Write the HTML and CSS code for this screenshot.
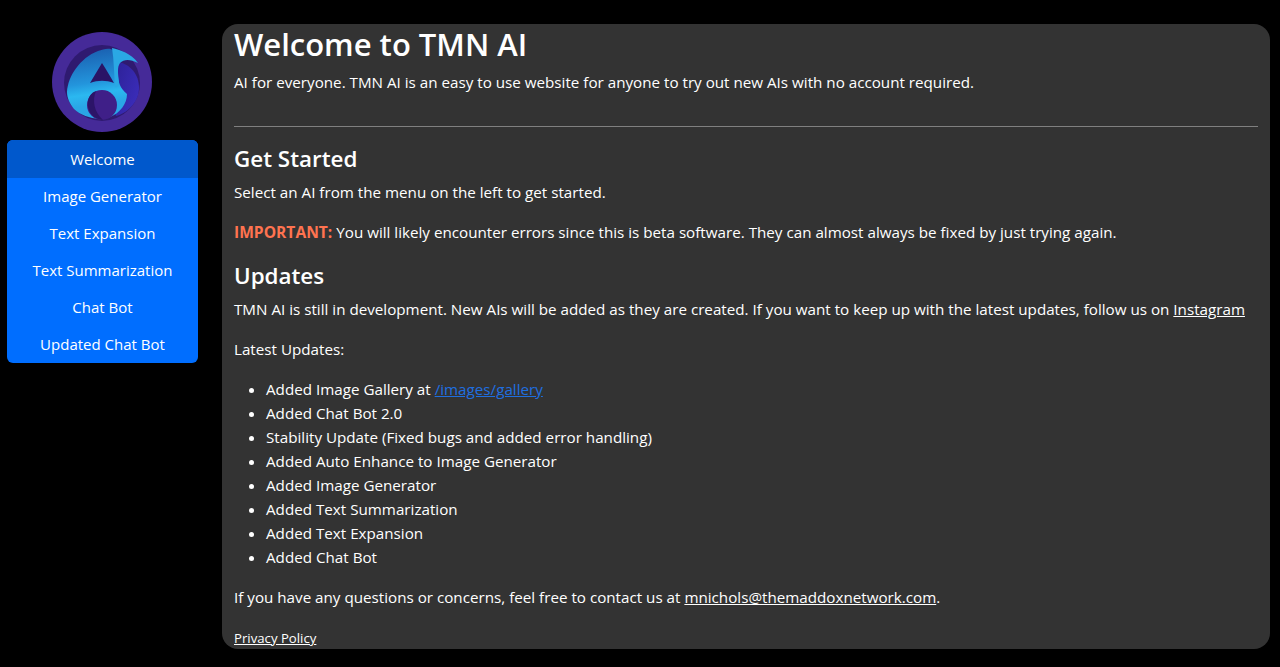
FILE: index.html
```html
<!DOCTYPE html>
<html lang="en">
<head>
    <meta charset="UTF-8">
    <meta name="viewport" content="width=device-width, initial-scale=1.0">
    <title>TMN AI</title>
    <link rel="stylesheet" href="styles.css">
</head>
<body>
    <div class="sidebar">
        <svg class="logo" viewBox="0 0 100 100" width="100" height="100" aria-label="TMN AI logo">
            <defs>
                <linearGradient id="swoosh" x1="0.4" y1="0" x2="0.5" y2="0.8">
                    <stop offset="0" stop-color="#1a5fb0"/>
                    <stop offset="0.6" stop-color="#2395dc"/>
                    <stop offset="0.8" stop-color="#2bb8f0"/>
                    <stop offset="1" stop-color="#2aa6e6"/>
                </linearGradient>
                <linearGradient id="wave" x1="0" y1="0" x2="1" y2="0.6">
                    <stop offset="0" stop-color="#2a1f90"/>
                    <stop offset="1" stop-color="#3a2cb8"/>
                </linearGradient>
            </defs>
            <circle cx="50" cy="50" r="50" fill="#452a98"/>
            <circle cx="50" cy="51" r="38" fill="#2f1a70"/>
            <path d="M66 30 C78 32 87 42 87 56 C87 68 78 80 64 84 L56 60 Z" fill="url(#wave)"/>
            <path d="M15 60 C16 44 28 26 46 19 C52 17 58 15 62 19 C65 28 66 34 66 42 C66 50 68 56 75 62 C75 72 68 81 58 85 C46 89 30 85 22 77 C18 72 15 66 15 60 Z" fill="url(#swoosh)"/>
            <path d="M60 16 C68 18 79 21 86 31 C78 27 72 27 68 31 C65 35 66 42 67 50 C67 54 65 56 63 55 C62 42 62 28 60 16 Z" fill="#2aa8e4"/>
            <path d="M50 31 L38 51 C46 48 54 48 62 51 C58 44 54 37 50 31 Z" fill="#2a1466"/>
            <circle cx="50" cy="73" r="15" fill="#3f1f88"/>
            <path d="M44 59 C35 62 32 76 42 85 C46 87 49 88 51 88 C42 80 40 68 44 59 Z" fill="#2c1468"/>
        </svg>
        <nav class="menu">
            <a class="menu-item active" href="#">Welcome</a>
            <a class="menu-item" href="#">Image Generator</a>
            <a class="menu-item" href="#">Text Expansion</a>
            <a class="menu-item" href="#">Text Summarization</a>
            <a class="menu-item" href="#">Chat Bot</a>
            <a class="menu-item" href="#">Updated Chat Bot</a>
        </nav>
    </div>
    <main class="content">
        <h1>Welcome to TMN AI</h1>
        <p>AI for everyone. TMN AI is an easy to use website for anyone to try out new AIs with no account required.</p>
        <hr>
        <h2>Get Started</h2>
        <p>Select an AI from the menu on the left to get started.</p>
        <p><strong class="important">IMPORTANT:</strong> You will likely encounter errors since this is beta software. They can almost always be fixed by just trying again.</p>
        <h2>Updates</h2>
        <p>TMN AI is still in development. New AIs will be added as they are created. If you want to keep up with the latest updates, follow us on <a href="#">Instagram</a></p>
        <p>Latest Updates:</p>
        <ul>
            <li>Added Image Gallery at <a class="blue-link" href="#">/images/gallery</a></li>
            <li>Added Chat Bot 2.0</li>
            <li>Stability Update (Fixed bugs and added error handling)</li>
            <li>Added Auto Enhance to Image Generator</li>
            <li>Added Image Generator</li>
            <li>Added Text Summarization</li>
            <li>Added Text Expansion</li>
            <li>Added Chat Bot</li>
        </ul>
        <p>If you have any questions or concerns, feel free to contact us at <a href="#">mnichols@themaddoxnetwork.com</a>.</p>
        <p class="small"><a href="#">Privacy Policy</a></p>
    </main>
</body>
</html>
```

FILE: styles.css
```css
* {
    box-sizing: border-box;
}
html, body {
    height: 100%;
}
body {
    margin: 0;
    display: flex;
    overflow: hidden;
    background: #000;
    color: #fff;
    font-family: "Open Sans", "Noto Sans", sans-serif;
    font-size: 15.2px;
    line-height: 24px;
}
a {
    color: #fff;
}
.sidebar {
    flex: 0 0 222px;
    padding: 32px 24px 0 7px;
    display: flex;
    flex-direction: column;
}
.logo {
    display: block;
    flex: none;
    margin: 0 0 8px 45px;
}
.menu {
    display: flex;
    flex-direction: column;
    background: #006eff;
    border-radius: 6px;
    overflow: hidden;
    font-size: 15px;
}
.menu-item {
    height: 37px;
    padding-top: 6px;
    text-align: center;
    text-decoration: none;
}
.menu-item.active {
    height: 38px;
    padding-top: 7px;
    background: #0058cc;
}
.content {
    flex: 1;
    margin: 24px 10px 18px 0;
    padding: 0 12px;
    background: #333;
    border-radius: 16px;
    overflow: hidden;
}
h1 {
    margin: 0 0 6px;
    padding-top: 1px;
    font-size: 31px;
    line-height: 39px;
    font-weight: 600;
}
h2 {
    margin: 17px 0 7px;
    font-size: 22.4px;
    line-height: 29px;
    font-weight: 600;
}
p {
    margin: 0 0 16px;
}
hr {
    margin: 32px 0 17px;
    border: 0;
    border-top: 1px solid #808080;
}
ul {
    margin: 0 0 16px;
    padding-left: 32px;
}
.important {
    color: #ff7350;
    font-weight: 700;
    font-size: 15.6px;
}
.blue-link {
    color: #1f6fe0;
}
.small {
    padding-top: 1px;
    font-size: 13.2px;
}
```
